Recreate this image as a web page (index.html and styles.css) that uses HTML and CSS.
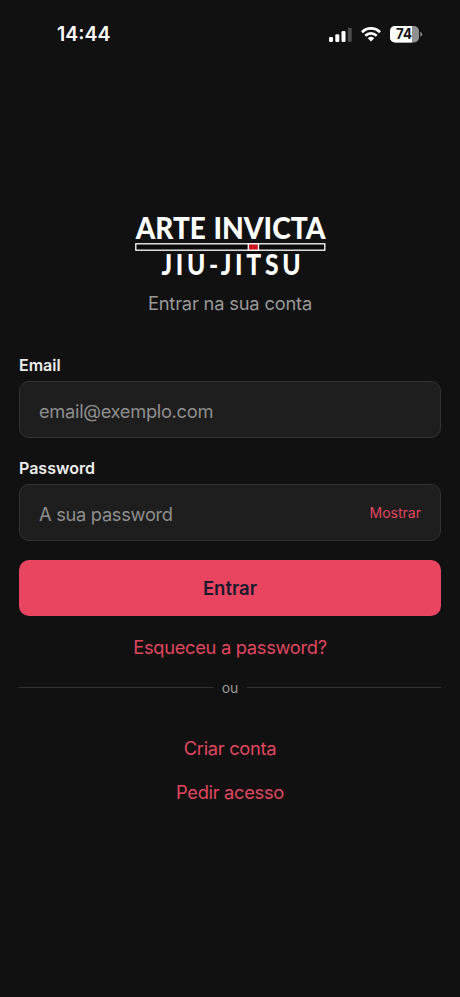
FILE: index.html
```html
<!DOCTYPE html>
<html lang="pt">
<head>
<meta charset="utf-8">
<meta name="viewport" content="width=device-width, initial-scale=1">
<title>Entrar</title>
<link rel="stylesheet" href="styles.css">
</head>
<body>
<header class="status">
  <span class="time">14:44</span>
  <div class="indicators">
    <svg class="signal" width="23" height="15" viewBox="0 0 23 15"><g fill="#fff"><rect x="0" y="10" width="4" height="5" rx="1.2"/><rect x="6.3" y="7.3" width="4" height="7.7" rx="1.2"/><rect x="12.5" y="4" width="4" height="11" rx="1.2"/></g><rect x="18.8" y="0.7" width="4" height="14.3" rx="1.2" fill="#4b4b4b"/></svg>
    <svg class="wifi" width="20" height="15" viewBox="0 0 20 15"><g fill="none" stroke="#fff" stroke-width="2.7"><path d="M1 5.2C6 .2 14 .2 19 5.2"/><path d="M4.3 8.7C7.6 5.5 12.4 5.5 15.7 8.7"/></g><path d="M6.8 11.2Q10 8.5 13.2 11.2L10 14.6Z" fill="#fff"/></svg>
    <svg class="battery" width="33" height="17" viewBox="0 0 33 17"><defs><clipPath id="shell"><rect width="29" height="16.4" rx="5"/></clipPath></defs><g clip-path="url(#shell)"><rect width="29" height="17" fill="#909090"/><rect width="22" height="17" fill="#fff"/></g><path d="M30.2 5.8Q32.2 6.5 32.2 8.3T30.2 10.8Z" fill="#858585"/><text class="charge" x="6" y="13.2" textLength="16" lengthAdjust="spacingAndGlyphs">74</text></svg>
  </div>
</header>
<main class="login">
  <svg class="logo" width="192" height="60" viewBox="0 0 192 60" role="img" aria-label="Arte Invicta Jiu-Jitsu">
    <text class="brand" x="1.8" y="24.3" textLength="70" lengthAdjust="spacingAndGlyphs">ARTE</text>
    <text class="brand" x="79.5" y="24.3" textLength="112" lengthAdjust="spacingAndGlyphs">INVICTA</text>
    <rect x="1.8" y="28.8" width="189" height="6.4" fill="#0b0b0b" stroke="#fff" stroke-width="1.3"/>
    <rect x="114.3" y="28.8" width="10.2" height="6.4" fill="#cc1420" stroke="#fff" stroke-width="1.3"/>
    <text class="art" transform="translate(27.5 59.5) scale(.88 1)" x="0" y="0" textLength="158" lengthAdjust="spacing">JIU-JITSU</text>
  </svg>
  <p class="subtitle"><span>Entrar na sua conta</span></p>
  <form class="form">
    <label class="label" for="email">Email</label>
    <div class="field"><input id="email" type="text" placeholder="email@exemplo.com"></div>
    <label class="label" for="password">Password</label>
    <div class="field"><input id="password" type="password" placeholder="A sua password"><button class="show" type="button">Mostrar</button></div>
    <button class="submit" type="button">Entrar</button>
  </form>
  <a class="link forgot">Esqueceu a password?</a>
  <div class="divider"><span>ou</span></div>
  <a class="link create">Criar conta</a>
  <a class="link request">Pedir acesso</a>
</main>
</body>
</html>
```
FILE: styles.css
```css
* { box-sizing: border-box; }
body {
  margin: 0;
  min-height: 997px;
  background: #111;
  color: #eee;
  font-family: Inter, "Liberation Sans", sans-serif;
}
.status {
  height: 68px;
  padding: 0 38px 0 57px;
  display: flex;
  justify-content: space-between;
  align-items: center;
}
.time { font-size: 19.5px; font-weight: 600; color: #fff; }
.indicators { display: flex; align-items: center; gap: 9px; margin-right: -.5px; }
.charge { font: 700 14px Inter, sans-serif; fill: #111; }
.login {
  padding: 147px 19px 0;
  display: flex;
  flex-direction: column;
  align-items: center;
}
.logo { display: block; overflow: visible; }
.brand { font: 900 31px Lato, sans-serif; fill: #fff; }
.art { font: 900 28px Lato, sans-serif; fill: #fff; }
.subtitle {
  margin: 16px 0 0;
  font-size: 18.3px;
  letter-spacing: -.18px;
  line-height: 24px;
  color: #999;
}
.form { width: 100%; margin-top: 40px; }
.label {
  display: block;
  height: 20px;
  margin-bottom: 6px;
  font-size: 16px;
  font-weight: 600;
  line-height: 20px;
}
.field {
  height: 57px;
  margin-bottom: 20px;
  padding: 0 19px;
  display: flex;
  align-items: center;
  border: 1px solid #333;
  border-radius: 10px;
  background: #1e1e1e;
}
input {
  flex: 1;
  min-width: 0;
  padding: 3px 0 0;
  border: 0;
  outline: 0;
  background: transparent;
  font: 18.3px Inter, sans-serif;
  letter-spacing: -.3px;
  color: #eee;
}
input::placeholder { color: #8f8f8f; opacity: 1; }
button { border: 0; padding: 0; font-family: inherit; }
.show { background: none; color: #e0475f; font-size: 14px; }
.submit {
  display: block;
  width: 100%;
  height: 56px;
  margin-top: -1.5px;
  border-radius: 10px;
  background: #e94560;
  color: #1a1a2e;
  font-size: 18.5px;
  font-weight: 600;
}
.link { font-size: 18.3px; letter-spacing: -.3px; line-height: 24px; color: #e0475f; }
.forgot { margin-top: 19.5px; }
.divider {
  width: 100%;
  height: 20px;
  margin-top: 18px;
  display: flex;
  align-items: center;
  gap: 9px;
  font-size: 14px;
  color: #999;
}
.divider::before, .divider::after { content: ""; flex: 1; height: 1px; background: #333; }
.create { margin-top: 38.5px; }
.request { margin-top: 20.5px; }
```
